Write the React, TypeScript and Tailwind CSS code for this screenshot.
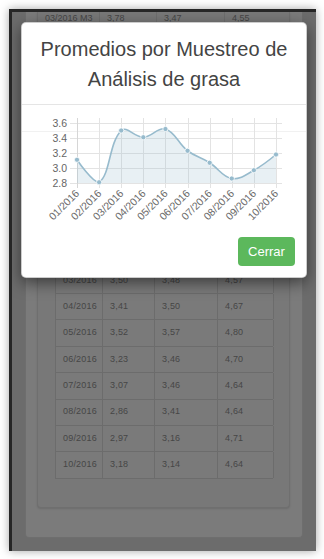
import React from "react";

const DATA = [
  { m: "01/2016", v: 3.11 },
  { m: "02/2016", v: 2.81 },
  { m: "03/2016", v: 3.5 },
  { m: "04/2016", v: 3.41 },
  { m: "05/2016", v: 3.52 },
  { m: "06/2016", v: 3.23 },
  { m: "07/2016", v: 3.07 },
  { m: "08/2016", v: 2.86 },
  { m: "09/2016", v: 2.97 },
  { m: "10/2016", v: 3.18 },
];

const ROWS = [
  ["01/2016", "3,11", "3,44", "4,60"],
  ["02/2016", "2,81", "3,40", "4,58"],
  ["03/2016", "3,50", "3,48", "4,57"],
  ["04/2016", "3,41", "3,50", "4,67"],
  ["05/2016", "3,52", "3,57", "4,80"],
  ["06/2016", "3,23", "3,46", "4,70"],
  ["07/2016", "3,07", "3,46", "4,64"],
  ["08/2016", "2,86", "3,41", "4,64"],
  ["09/2016", "2,97", "3,16", "4,71"],
  ["10/2016", "3,18", "3,14", "4,64"],
];

const X0 = 55;
const DX = 22.11;
const Y_BOTTOM = 78;
const Y_TOP = 18;
const yOf = (v: number) => Y_BOTTOM - (v - 2.8) * 75;

type P = { x: number; y: number };

function spline(a: P, b: P, c: P, t: number) {
  const d01 = Math.hypot(b.x - a.x, b.y - a.y);
  const d12 = Math.hypot(c.x - b.x, c.y - b.y);
  const fa = (t * d01) / (d01 + d12 || 1);
  const fb = (t * d12) / (d01 + d12 || 1);
  const clamp = (y: number) => Math.max(Y_TOP - 6, Math.min(Y_BOTTOM, y));
  return {
    inner: { x: b.x - fa * (c.x - a.x), y: clamp(b.y - fa * (c.y - a.y)) },
    outer: { x: b.x + fb * (c.x - a.x), y: clamp(b.y + fb * (c.y - a.y)) },
  };
}

function Chart() {
  const pts: P[] = DATA.map((d, i) => ({ x: X0 + i * DX, y: yOf(d.v) }));
  const cps = pts.map((p, i) => {
    const prev = pts[Math.max(0, i - 1)];
    const next = pts[Math.min(pts.length - 1, i + 1)];
    const t = i > 0 && i < pts.length - 1 ? 0.4 : 0;
    return spline(prev, p, next, t);
  });
  let d = `M${pts[0].x},${pts[0].y}`;
  for (let i = 1; i < pts.length; i++) {
    const a = cps[i - 1].outer;
    const b = cps[i].inner;
    d += ` C${a.x},${a.y} ${b.x},${b.y} ${pts[i].x},${pts[i].y}`;
  }
  const last = pts[pts.length - 1];
  const area = `${d} L${last.x},${Y_BOTTOM} L${pts[0].x},${Y_BOTTOM} Z`;
  const yTicks = [3.6, 3.4, 3.2, 3.0, 2.8];
  return (
    <svg width="284" height="127" viewBox="0 0 284 127" className="block">
      <line x1="0" x2="284" y1="26.5" y2="26.5" stroke="#f1f1f1" strokeWidth="1" />
      {yTicks.map((t) => (
        <g key={t}>
          <line x1="48" x2="260" y1={yOf(t) + 0.5} y2={yOf(t) + 0.5} stroke="#e3e3e3" strokeWidth="1" />
          <text
            x="45"
            y={yOf(t) + 3.8}
            textAnchor="end"
            fill="#666"
            fontSize="10.5"
            fontFamily="'Liberation Sans', Arial, sans-serif"
          >
            {t.toFixed(1)}
          </text>
        </g>
      ))}
      {pts.map((p, i) => (
        <line
          key={i}
          x1={Math.round(p.x) + 0.5}
          x2={Math.round(p.x) + 0.5}
          y1="13"
          y2="83"
          stroke={i === 0 ? "#d6d6d6" : "#e3e3e3"}
          strokeWidth="1"
        />
      ))}
      <path d={area} fill="rgba(151,187,205,0.22)" />
      <path d={d} fill="none" stroke="#97bbcd" strokeWidth="1.6" />
      {pts.map((p, i) => (
        <circle key={i} cx={p.x} cy={p.y} r="2.6" fill="#97bbcd" stroke="#fff" strokeWidth="0.8" />
      ))}
      {pts.map((p, i) => (
        <text
          key={i}
          x={p.x + 3}
          y={89}
          transform={`rotate(-45 ${p.x + 3} 89)`}
          textAnchor="end"
          fill="#6a6a6a"
          fontSize="10.5"
          fontFamily="'Liberation Sans', Arial, sans-serif"
        >
          {DATA[i].m}
        </text>
      ))}
    </svg>
  );
}

export default function App() {
  return (
    <div
      className="w-[324px] h-[559px] bg-white p-[9px]"
      style={{ fontFamily: "'Liberation Sans', Arial, sans-serif" }}
    >
      <div className="relative w-[307px] h-[542px] overflow-hidden bg-[#6c6c6c] border-t-[3px] border-l-[3px] border-[#262626] shadow-[0_0_9px_rgba(0,0,0,0.35)]">
        {/* outer panel */}
        <div className="ml-[13px] w-[278px] h-[526px] bg-[#7b7b7b] border-x border-b border-[#6e6e6e] rounded-b-[4px] pl-[11px]">
          {/* inner panel */}
          <div className="w-[253px] h-[496px] bg-[#787878] border-x border-b border-[#6f6f6f] rounded-b-[4px] shadow-[0_1px_2px_rgba(0,0,0,0.12)]">
            {/* top row (scrolled) */}
            <div className="grid grid-cols-[62px_57px_68px_64px] h-[13px] text-[9px] leading-[13px] text-[#464646]">
              <div className="pl-[7px] border-r border-[#6e6e6e]">03/2016 M3</div>
              <div className="pl-[7px] border-r border-[#6e6e6e]">3,78</div>
              <div className="pl-[7px] border-r border-[#6e6e6e]">3,47</div>
              <div className="pl-[7px]">4,55</div>
            </div>
            {/* lower table */}
            <div className="ml-[17px] mt-[188.8px] w-[218px] border-t border-l border-[#6c6c6c] bg-[#7a7a7a]">
              {ROWS.map((r) => (
                <div
                  key={r[0]}
                  className="grid grid-cols-[47px_52px_63px_56px] h-[26.4px] border-b border-[#6c6c6c] text-[9px] text-[#464646] tracking-[0.2px]"
                >
                  {r.map((c, j) => (
                    <div key={j} className="flex items-center pl-[7px] border-r border-[#6c6c6c]">
                      {c}
                    </div>
                  ))}
                </div>
              ))}
            </div>
          </div>
        </div>

        {/* modal */}
        <div className="absolute left-[9px] top-[10px] w-[286px] h-[256px] bg-white rounded-[5px] border border-black/20 shadow-[0_5px_15px_rgba(0,0,0,0.5)] flex flex-col">
          <div className="pt-[11px] pb-[10px] border-b border-[#e5e5e5] text-center text-[20px] leading-[30px] text-[#444]">
            Promedios por Muestreo de
            <br />
            Análisis de grasa
          </div>
          <Chart />
          <div className="flex justify-end pt-[5px] pr-[11px]">
            <button className="w-[57px] h-[29px] rounded-[4px] bg-[#5cb85c] text-white text-[13px] flex items-center justify-center">
              Cerrar
            </button>
          </div>
        </div>
      </div>
    </div>
  );
}
